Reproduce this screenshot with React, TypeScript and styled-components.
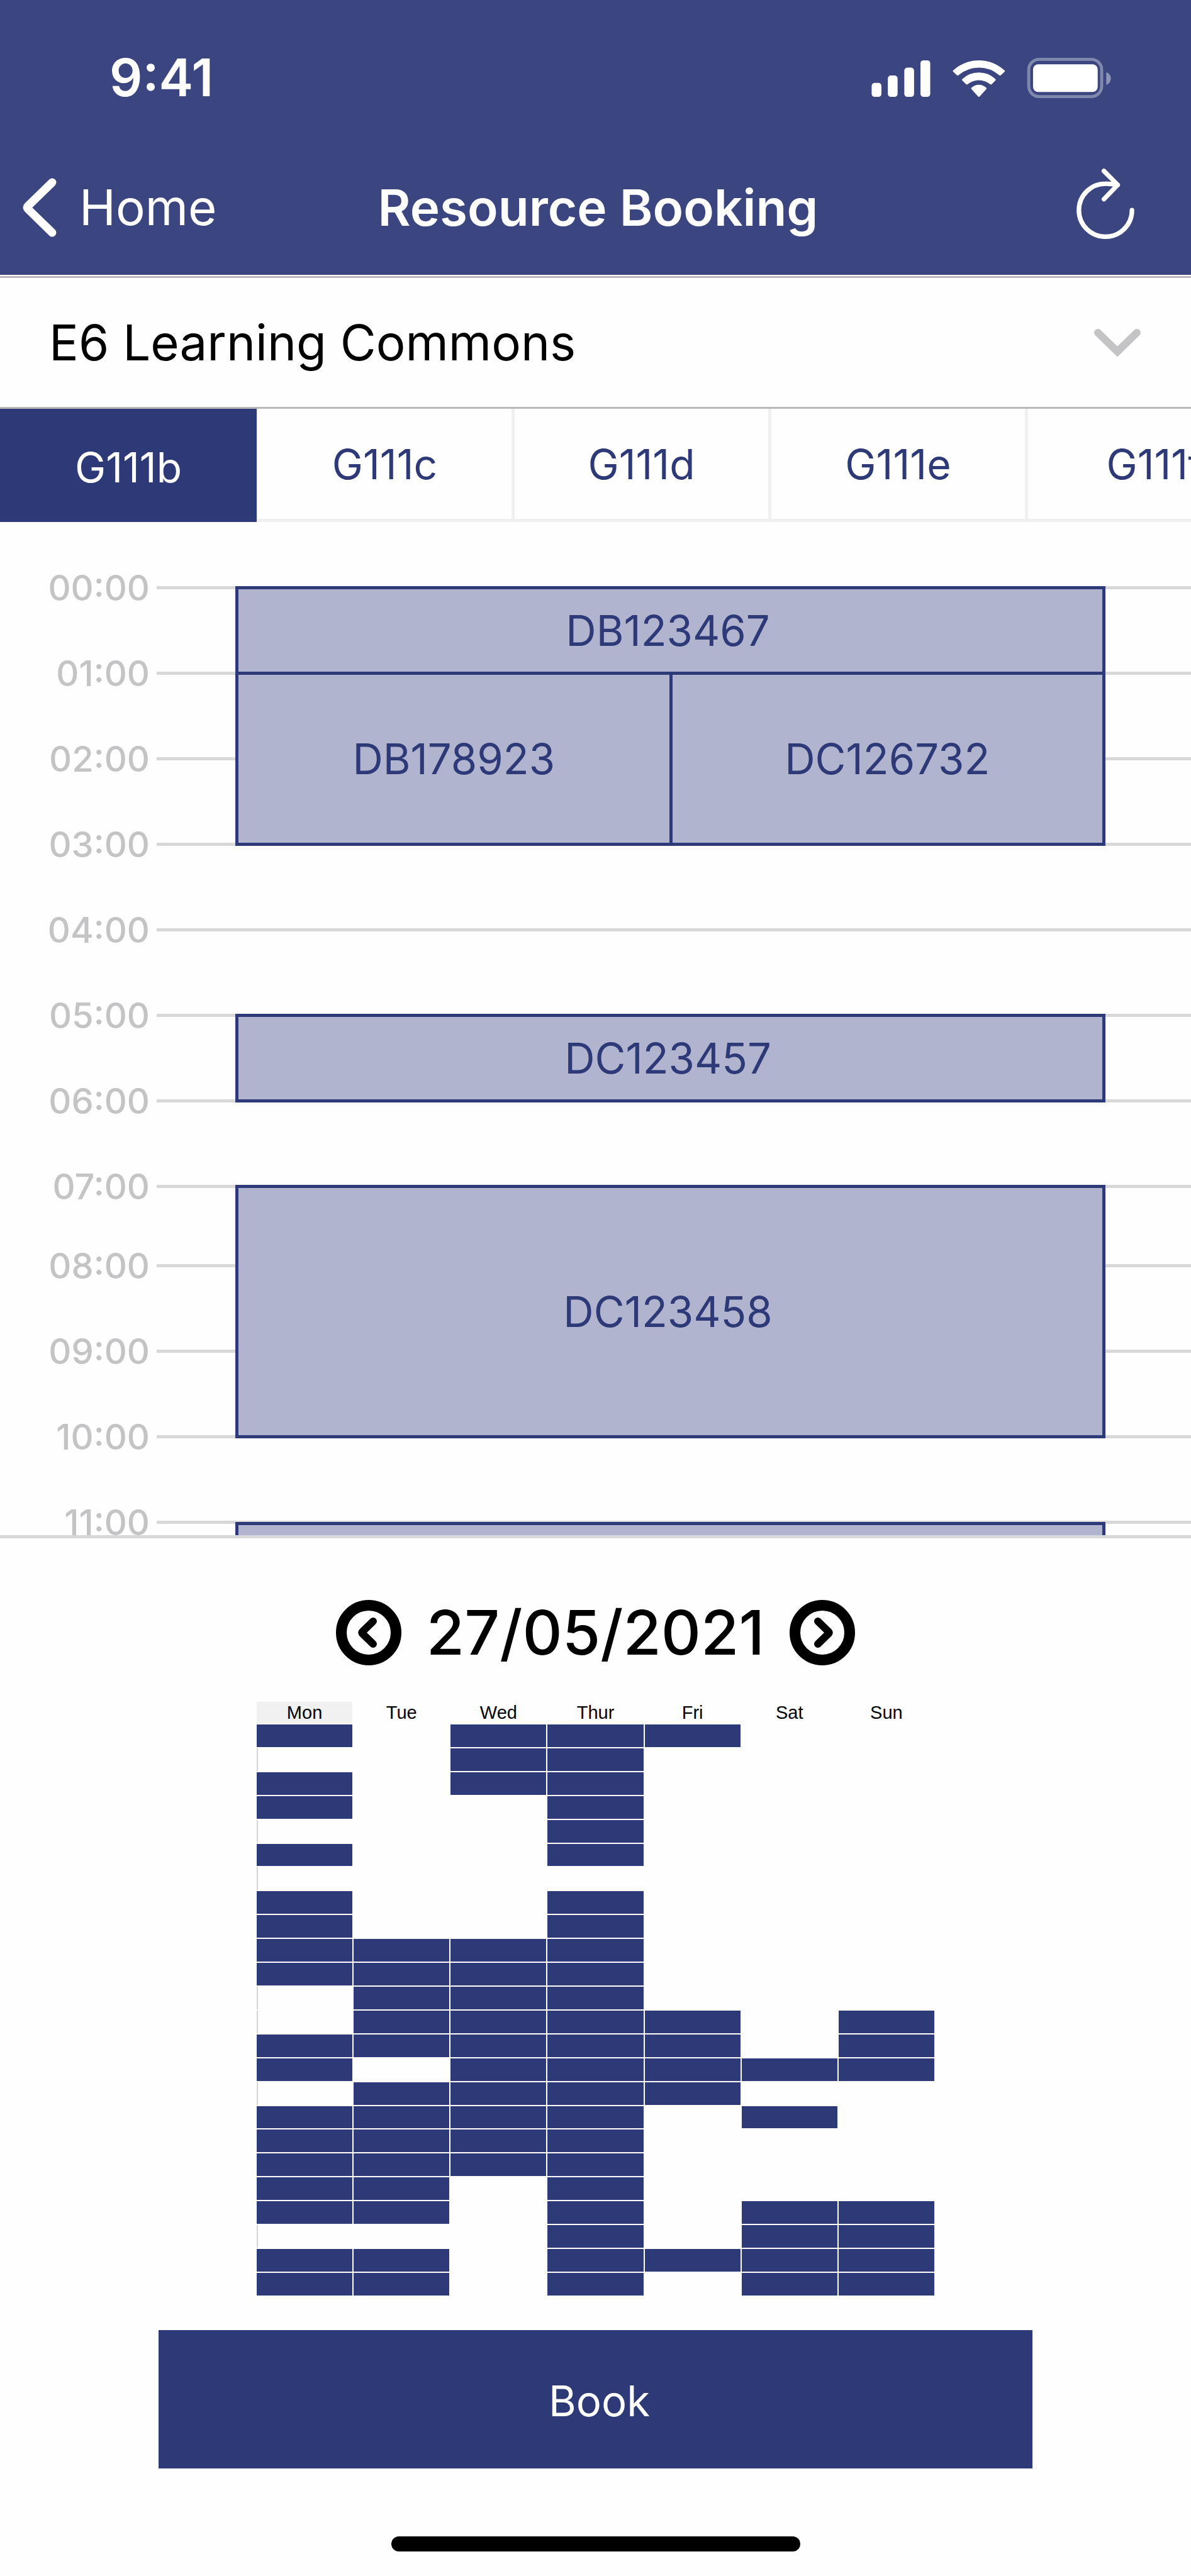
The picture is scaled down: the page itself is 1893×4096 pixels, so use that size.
import React, { useState } from 'react';
import styled, { createGlobalStyle } from 'styled-components';

const color = {
  header: '#3b4580',
  navy: '#2e3a78',
  slot: '#b0b4cf',
  grey: '#c4c4c6',
  rule: '#d8d8d8',
  divider: '#b9b9b9',
  pale: '#f0f0f0',
  page: '#fefefe',
};

const GlobalStyle = createGlobalStyle`
  *, *::before, *::after { box-sizing: border-box; }
  body {
    margin: 0;
    background: ${color.page};
    font-family: Inter, "Liberation Sans", sans-serif;
    color: #000;
  }
  button, select { font: inherit; color: inherit; border: 0; border-radius: 0; background: none; padding: 0; margin: 0; }
  svg { display: block; flex: none; }
`;

const Screen = styled.main`
  display: flex;
  flex-direction: column;
  overflow: hidden;
`;

const Header = styled.header`
  background: ${color.header};
  color: #fff;
  padding-bottom: 25px;
`;

const StatusBar = styled.div`
  display: flex;
  align-items: center;
  justify-content: space-between;
  height: 248px;
  padding: 0 127px 0 174px;
`;

const Clock = styled.time`
  font-size: 82px;
  font-weight: 600;
  line-height: 96px;
`;

const NavBar = styled.nav`
  display: grid;
  grid-template-columns: 1fr auto 1fr;
  align-items: center;
  height: 164px;
  padding: 0 28px 0 36px;
`;

const BackLink = styled.a`
  display: flex;
  align-items: center;
  gap: 36px;
  color: #fff;
  text-decoration: none;
  font-size: 78px;
  line-height: 96px;
`;

const Title = styled.h1`
  margin: 0;
  font-size: 80px;
  font-weight: 600;
  line-height: 96px;
`;

const RefreshButton = styled.button`
  justify-self: end;
  margin: 0 62px 12px 0;
`;

const LocationField = styled.div`
  position: relative;
  margin-top: 2px;
  border-top: 3px solid ${color.divider};
  border-bottom: 3px solid ${color.divider};
`;

const LocationSelect = styled.select`
  appearance: none;
  display: block;
  width: 100%;
  height: 205px;
  padding: 0 180px 0 78px;
  font-size: 78px;
  outline: none;
`;

const SelectArrow = styled.svg`
  position: absolute;
  top: 50%;
  right: 80px;
  margin-top: -22px;
  pointer-events: none;
`;

const Tabs = styled.div`
  display: flex;
  overflow: hidden;
`;

const Tab = styled.button<{ $active: boolean }>`
  flex: 0 0 408px;
  height: 180px;
  font-size: 66px;
  font-weight: 400;
  color: ${(p) => (p.$active ? '#fff' : color.navy)};
  background: ${(p) => (p.$active ? color.navy : 'transparent')};
  border: solid ${color.pale};
  border-width: ${(p) => (p.$active ? '0' : '0 3px 5px 2px')};
  padding-top: ${(p) => (p.$active ? '5px' : '0')};
`;

const Schedule = styled.section`
  display: grid;
  grid-template-columns: 238px 11px 125px minmax(0, 1fr) minmax(0, 1fr) 136px;
  grid-template-rows: repeat(7, 136px) 126px repeat(3, 136px) 23px;
  padding-top: 102px;
  border-bottom: 5px solid ${color.rule};
  overflow: hidden;
`;

const HourLabel = styled.span<{ $row: number }>`
  grid-column: 1;
  grid-row: ${(p) => p.$row};
  align-self: start;
  margin-top: -33px;
  text-align: right;
  font-size: 56px;
  font-weight: 500;
  line-height: 72px;
  color: ${color.grey};
`;

const HourRule = styled.div<{ $row: number }>`
  grid-column: 3 / -1;
  grid-row: ${(p) => p.$row};
  align-self: start;
  height: 5px;
  background: ${color.rule};
`;

const Booking = styled.div<{ $from: number; $to: number; $half?: 'left' | 'right' }>`
  grid-column: ${(p) => (p.$half === 'left' ? '4' : p.$half === 'right' ? '5' : '4 / 6')};
  grid-row: ${(p) => p.$from + 1} / ${(p) => p.$to + 1};
  margin: 0 ${(p) => (p.$half === 'left' ? '-3px' : '0')} -5px ${(p) => (p.$half === 'right' ? '-2px' : '0')};
  padding-right: ${(p) => (p.$half ? '0' : '8px')};
  display: flex;
  align-items: center;
  justify-content: center;
  border: 5px solid ${color.navy};
  background: ${color.slot};
  color: ${color.navy};
  font-size: 67px;
  line-height: 80px;
`;

const ClippedBooking = styled(Booking)`
  margin-top: 2px;
  border-bottom: 0;
`;

const DateBar = styled.div`
  display: flex;
  align-items: center;
  justify-content: center;
  gap: 40px;
  height: 120px;
  margin-top: 90px;
`;

const DateText = styled.time`
  font-size: 98px;
  font-weight: 500;
  line-height: 120px;
`;

const Week = styled.table`
  align-self: center;
  table-layout: fixed;
  width: 1081px;
  height: 948px;
  margin-top: 48px;
  border-collapse: separate;
  border-spacing: 2px;
`;

const DayHead = styled.th<{ $today: boolean }>`
  padding: 0;
  font-family: "Liberation Sans", Arial, sans-serif;
  font-size: 29px;
  font-weight: 400;
  line-height: 34px;
  background: ${(p) => (p.$today ? '#f1f1f1' : 'transparent')};
`;

const Slot = styled.td<{ $busy: boolean }>`
  padding: 0;
  background: ${(p) => (p.$busy ? color.navy : 'transparent')};
  &:first-child { border-left: 2px solid ${(p) => (p.$busy ? color.navy : '#d4d4d4')}; }
`;

const BookButton = styled.button`
  height: 220px;
  margin: 53px 252px 0;
  padding: 6px 0 0 12px;
  background: ${color.navy};
  color: #fff;
  font-size: 67px;
  line-height: 80px;
`;

const HomeIndicator = styled.div`
  align-self: center;
  width: 650px;
  height: 24px;
  margin: 108px 0 39px;
  border-radius: 12px;
  background: #000;
`;

const StatusIcons = () => (
  <svg width="381" height="64" viewBox="1427 96 392 66" fill="#fff" aria-hidden="true">
    <rect x="1427" y="137" width="16" height="23" rx="5" />
    <rect x="1453.500" y="125" width="16" height="35" rx="5" />
    <rect x="1480.500" y="112" width="16" height="48" rx="5" />
    <rect x="1507" y="100" width="16" height="60" rx="5" />
    <path d="M1560.600 116.500Q1579 100 1602.700 100Q1626.500 100 1644.800 116.500Q1646 117.600 1644.900 118.800L1638.600 124.500Q1637.500 125.500 1636.300 124.500Q1621.500 112 1602.700 112Q1584 112 1569.200 124.500Q1568 125.500 1566.900 124.500L1560.600 118.800Q1559.500 117.600 1560.600 116.500Z" />
    <path d="M1575.500 130.800Q1587 120 1602.700 120Q1618.500 120 1629.900 130.800Q1631 132 1629.900 133.200L1623.600 139.300Q1622.500 140.200 1621.300 139.300Q1613 132.500 1602.700 132.500Q1592.500 132.500 1584.200 139.300Q1583 140.200 1581.900 139.300L1575.500 133.200Q1574.500 132 1575.500 130.800Z" />
    <path d="M1590.600 144.900Q1596 140 1602.700 140Q1609.500 140 1614.900 144.900Q1616 146 1614.900 147.300L1603.900 159.300Q1602.700 160.500 1601.600 159.300L1590.600 147.300Q1589.500 146 1590.600 144.900Z" />
    <rect x="1684.500" y="98.500" width="119.500" height="61" rx="17" fill="none" stroke="#fff" strokeOpacity="0.36" strokeWidth="5" />
    <rect x="1691.500" y="106.500" width="106" height="45.500" rx="8.500" />
    <path d="M1811.500 119.500Q1819 122.500 1819 130Q1819 137.500 1811.500 140.500Z" fillOpacity="0.42" />
  </svg>
);

const BackIcon = () => (
  <svg width="54" height="94" viewBox="0 0 54 94" fill="none" stroke="#fff" strokeWidth="13" strokeLinecap="round" strokeLinejoin="round" aria-hidden="true">
    <path d="M47 7L8 45Q6 47 8 49L47 87" />
  </svg>
);

const RefreshIcon = () => (
  <svg width="92" height="112" viewBox="0 0 94 115" fill="none" stroke="#fff" strokeWidth="7.500" strokeLinecap="round" strokeLinejoin="round" aria-hidden="true">
    <path d="M90.300 68A43.300 43.300 0 1 1 47 24.700Q54 24.500 67 26.700" />
    <path d="M44.500 4L67 26.700L44.500 50" />
  </svg>
);

const RoundArrow = ({ next }: { next?: boolean }) => (
  <svg width="104" height="104" viewBox="0 0 104 104" fill="none" stroke="#000" aria-hidden="true">
    <circle cx="52" cy="52" r="43.500" strokeWidth="17" />
    <path
      d={next ? 'M45 34L62 50.500Q63.500 52 62 53.500L45 70' : 'M59 34L42 50.500Q40.500 52 42 53.500L59 70'}
      strokeWidth="12"
      strokeLinecap="round"
      strokeLinejoin="round"
    />
  </svg>
);

const rooms = ['G111b', 'G111c', 'G111d', 'G111e', 'G111f'];
const hours = Array.from({ length: 12 }, (_, h) => `${String(h).padStart(2, '0')}:00`);
const bookings: { id: string; from: number; to: number; half?: 'left' | 'right' }[] = [
  { id: 'DB123467', from: 0, to: 1 },
  { id: 'DB178923', from: 1, to: 3, half: 'left' },
  { id: 'DC126732', from: 1, to: 3, half: 'right' },
  { id: 'DC123457', from: 5, to: 6 },
  { id: 'DC123458', from: 7, to: 10 },
];
const days = ['Mon', 'Tue', 'Wed', 'Thur', 'Fri', 'Sat', 'Sun'];

/* One line per hour, one character per day: # is a booked hour. */
const week = [
  '#.###..', '..##...', '#.##...', '#..#...', '...#...', '#..#...', '.......', '#..#...',
  '#..#...', '####...', '####...', '.###...', '.####.#', '#####.#', '#.#####', '.####..',
  '####.#.', '####...', '####...', '##.#...', '##.#.##', '...#.##', '##.####', '##.#.##',
];

export default function App() {
  const [room, setRoom] = useState('G111b');

  return (
    <Screen>
      <GlobalStyle />
      <Header>
        <StatusBar>
          <Clock>9:41</Clock>
          <StatusIcons />
        </StatusBar>
        <NavBar>
          <BackLink href="#home">
            <BackIcon />
            Home
          </BackLink>
          <Title>Resource Booking</Title>
          <RefreshButton type="button" aria-label="Refresh">
            <RefreshIcon />
          </RefreshButton>
        </NavBar>
      </Header>

      <LocationField>
        <LocationSelect aria-label="Location" defaultValue="e6">
          <option value="e6">E6 Learning Commons</option>
        </LocationSelect>
        <SelectArrow width="74" height="44" viewBox="0 0 74 44" fill="none" stroke={color.grey} strokeWidth="12" strokeLinecap="round" aria-hidden="true">
          <path d="M6 6L37 36L68 6" />
        </SelectArrow>
      </LocationField>

      <Tabs role="tablist" aria-label="Rooms">
        {rooms.map((name) => (
          <Tab key={name} type="button" role="tab" aria-selected={name === room} $active={name === room} onClick={() => setRoom(name)}>
            {name}
          </Tab>
        ))}
      </Tabs>

      <Schedule aria-label="Schedule">
        {hours.map((hour, i) => (
          <React.Fragment key={hour}>
            <HourLabel $row={i + 1}>{hour}</HourLabel>
            <HourRule $row={i + 1} />
          </React.Fragment>
        ))}
        {bookings.map((b) => (
          <Booking key={b.id} $from={b.from} $to={b.to} $half={b.half}>
            {b.id}
          </Booking>
        ))}
        <ClippedBooking $from={11} $to={12} />
      </Schedule>

      <DateBar>
        <button type="button" aria-label="Previous day">
          <RoundArrow />
        </button>
        <DateText dateTime="2021-05-27">27/05/2021</DateText>
        <button type="button" aria-label="Next day">
          <RoundArrow next />
        </button>
      </DateBar>

      <Week aria-label="Weekly availability">
        <thead>
          <tr>
            {days.map((day, i) => (
              <DayHead key={day} scope="col" $today={i === 0}>
                {day}
              </DayHead>
            ))}
          </tr>
        </thead>
        <tbody>
          {week.map((line, hour) => (
            <tr key={hour}>
              {line.split('').map((cell, day) => (
                <Slot key={day} $busy={cell === '#'} />
              ))}
            </tr>
          ))}
        </tbody>
      </Week>

      <BookButton type="button">Book</BookButton>
      <HomeIndicator />
    </Screen>
  );
}
